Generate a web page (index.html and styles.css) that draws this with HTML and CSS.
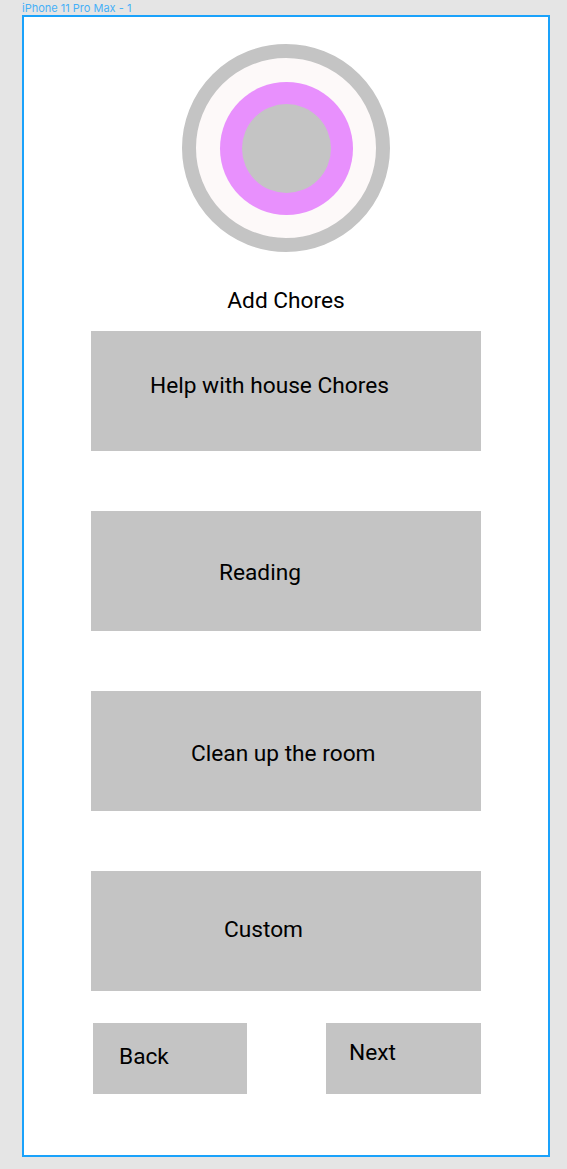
FILE: index.html
```html
<!DOCTYPE html>
<html lang="en">
<head>
<meta charset="utf-8">
<title>iPhone 11 Pro Max - 1</title>
<link rel="stylesheet" href="styles.css">
</head>
<body>
  <div class="frame-label">iPhone 11 Pro Max - 1</div>
  <main class="frame">
    <div class="logo">
      <div class="logo-ring">
        <div class="logo-core"></div>
      </div>
    </div>
    <h1 class="title">Add Chores</h1>
    <ul class="chores">
      <li class="chore chore--help">Help with house Chores</li>
      <li class="chore chore--reading">Reading</li>
      <li class="chore chore--clean">Clean up the room</li>
      <li class="chore chore--custom">Custom</li>
    </ul>
    <div class="nav">
      <button class="nav-btn nav-btn--back" type="button">Back</button>
      <button class="nav-btn nav-btn--next" type="button">Next</button>
    </div>
  </main>
</body>
</html>
```

FILE: styles.css
```css
* {
  box-sizing: border-box;
}

html, body {
  margin: 0;
  padding: 0;
}

body {
  background: #e5e5e5;
  font-family: Roboto, "Liberation Sans", sans-serif;
  color: #000;
  width: 567px;
  height: 1169px;
  overflow: hidden;
}

.frame-label {
  margin-left: 22px;
  height: 15px;
  padding-top: 3px;
  font-family: Inter, Roboto, sans-serif;
  font-size: 11px;
  line-height: 11px;
  color: #47b0f7;
}

.frame {
  margin-left: 22px;
  width: 528px;
  height: 1142px;
  border: 2px solid #1aa2fb;
  background: #ffffff;
  display: flex;
  flex-direction: column;
}

.logo {
  margin-top: 27px;
  align-self: center;
  width: 208px;
  height: 208px;
  border-radius: 50%;
  border: 14px solid #c4c4c4;
  background: #fdf9f9;
  display: flex;
  align-items: center;
  justify-content: center;
}

.logo-ring {
  width: 133px;
  height: 133px;
  border-radius: 50%;
  background: #e890fd;
  display: flex;
  align-items: center;
  justify-content: center;
}

.logo-core {
  width: 89px;
  height: 89px;
  border-radius: 50%;
  background: #c4c4c4;
}

.title {
  margin: 38px 0 0;
  text-align: center;
  font-size: 22.7px;
  font-weight: 400;
  line-height: 22.7px;
  height: 22.7px;
}

.chores {
  list-style: none;
  margin: 18px 0 0 67px;
  padding: 0;
  display: flex;
  flex-direction: column;
  gap: 60px;
}

.chore {
  width: 390px;
  height: 120px;
  background: #c4c4c4;
  font-size: 22.7px;
  line-height: 22.7px;
}

.chore--help { padding: 44px 0 0 59px; }
.chore--reading { padding: 51px 0 0 128px; }
.chore--clean { padding: 52px 0 0 100px; }
.chore--custom { padding: 48px 0 0 133px; }

.nav {
  margin: 32px 0 0 69px;
  display: flex;
  gap: 79px;
}

.nav-btn {
  height: 71px;
  border: 0;
  margin: 0;
  background: #c4c4c4;
  font-family: Roboto, "Liberation Sans", sans-serif;
  font-size: 22.7px;
  line-height: 22.7px;
  color: #000;
  display: flex;
  align-items: flex-start;
  justify-content: flex-start;
}

.nav-btn--back {
  width: 154px;
  padding: 23px 0 0 26px;
}

.nav-btn--next {
  width: 155px;
  padding: 19px 0 0 23px;
}
```
